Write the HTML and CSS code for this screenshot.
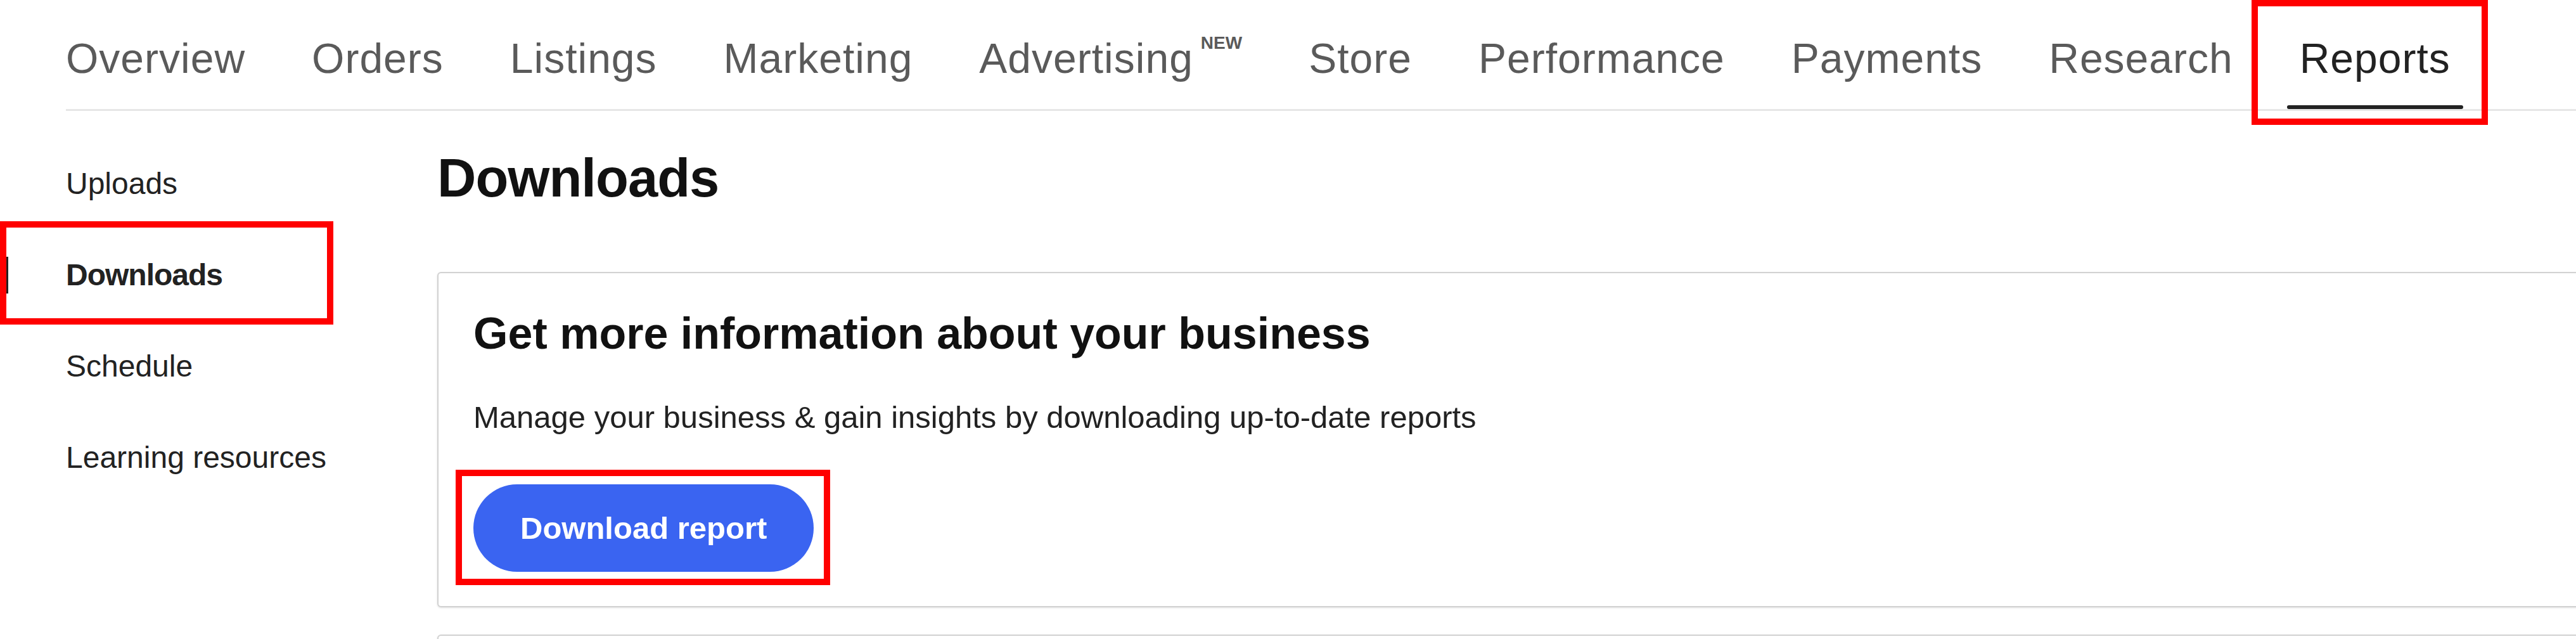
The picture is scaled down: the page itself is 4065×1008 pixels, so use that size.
FILE: index.html
```html
<!DOCTYPE html>
<html lang="en">
<head>
<meta charset="utf-8">
<title>Reports – Downloads</title>
<link rel="stylesheet" href="styles.css">
</head>
<body>
<header class="topnav">
  <ul class="tabs">
    <li class="tab"><a href="#">Overview</a></li>
    <li class="tab"><a href="#">Orders</a></li>
    <li class="tab"><a href="#">Listings</a></li>
    <li class="tab"><a href="#">Marketing</a></li>
    <li class="tab"><a href="#">Advertising</a><sup class="badge">NEW</sup></li>
    <li class="tab"><a href="#">Store</a></li>
    <li class="tab"><a href="#">Performance</a></li>
    <li class="tab"><a href="#">Payments</a></li>
    <li class="tab"><a href="#">Research</a></li>
    <li class="tab tab-active mark-tab"><a href="#">Reports</a></li>
  </ul>
</header>
<div class="layout">
  <nav class="sidenav">
    <a class="side-item" href="#">Uploads</a>
    <a class="side-item side-active mark-side" href="#">Downloads</a>
    <a class="side-item" href="#">Schedule</a>
    <a class="side-item" href="#">Learning resources</a>
  </nav>
  <main class="main">
    <h1 class="page-title">Downloads</h1>
    <section class="card">
      <h2 class="card-title">Get more information about your business</h2>
      <p class="card-text">Manage your business &amp; gain insights by downloading up-to-date reports</p>
      <div class="btn-row">
        <div class="btn-frame"><button class="btn" type="button">Download report</button></div>
      </div>
    </section>
    <section class="card card-next"></section>
  </main>
</div>
</body>
</html>
```
FILE: styles.css
```css
*, *::before, *::after { box-sizing: border-box; }

html, body {
  margin: 0;
  padding: 0;
  overflow: hidden;
  background: #fff;
}

body {
  font-family: "Liberation Sans", Arial, sans-serif;
  color: #222;
  width: 4065px;
  height: 1008px;
}

a { color: inherit; text-decoration: none; }

/* ---------- top tabs ---------- */
.topnav {
  padding-left: 104px;
}

.tabs {
  list-style: none;
  margin: 0;
  padding: 52px 0 0 0;
  display: flex;
  gap: 105px;
  border-bottom: 3px solid #e6e6e6;
}

.tab {
  position: relative;
  padding-bottom: 40px;
  font-size: 66px;
  line-height: 80px;
  letter-spacing: 1px;
  color: #5a5a5a;
  white-space: nowrap;
}

.badge {
  display: inline-block;
  vertical-align: top;
  font-size: 28px;
  line-height: 28px;
  font-weight: 700;
  letter-spacing: 0;
  margin-left: 12px;
  margin-top: 2px;
  color: #5a5a5a;
}

.tab-active { color: #222; }

.tab-active::after {
  content: "";
  position: absolute;
  left: -20px;
  right: -20px;
  bottom: 0;
  height: 6px;
  border-radius: 3px;
  background: #222;
}

.mark-tab::before {
  content: "";
  position: absolute;
  top: -52px;
  bottom: -25px;
  left: -76px;
  right: -59px;
  border: 10px solid #ff0000;
  pointer-events: none;
}

/* ---------- layout ---------- */
.layout {
  display: grid;
  grid-template-columns: 690px 1fr;
}

.sidenav {
  display: flex;
  flex-direction: column;
  padding-top: 43px;
}

.side-item {
  position: relative;
  padding: 43px 0 43px 104px;
  font-size: 48px;
  line-height: 58px;
  color: #222;
  white-space: nowrap;
}

.side-active {
  font-weight: 700;
  letter-spacing: -1px;
}

.side-active::before {
  content: "";
  position: absolute;
  left: 9px;
  top: 43px;
  width: 4px;
  height: 58px;
  background: #222;
}

.mark-side::after {
  content: "";
  position: absolute;
  left: 0;
  top: -13px;
  bottom: -6px;
  width: 526px;
  border: 10px solid #ff0000;
  pointer-events: none;
}

/* ---------- main ---------- */
.main {
  padding-top: 56px;
  min-width: 0;
}

.page-title {
  margin: 0;
  font-size: 85px;
  line-height: 100px;
  font-weight: 700;
  letter-spacing: -1px;
  color: #111;
}

.card {
  margin-top: 98px;
  width: calc(100% + 200px);
  border: 2px solid #d2d2d2;
  border-radius: 6px;
  padding: 55px 0 54px 55px;
  box-shadow: 0 1px 3px rgba(0, 0, 0, 0.12);
  background: #fff;
}

.card-title {
  margin: 0;
  font-size: 70px;
  line-height: 80px;
  font-weight: 700;
  color: #111;
}

.card-text {
  margin: 62px 0 0 0;
  font-size: 49px;
  line-height: 60px;
  color: #222;
}

.btn-row {
  margin-top: 76px;
  display: flex;
}

.btn-frame {
  position: relative;
  display: flex;
}

.btn-frame::after {
  content: "";
  position: absolute;
  top: -23px;
  bottom: -21px;
  left: -28px;
  right: -26px;
  border: 10px solid #ff0000;
  pointer-events: none;
}

.btn {
  display: block;
  border: 0;
  border-radius: 69px;
  background: #3a64f1;
  color: #fff;
  font-family: "Liberation Sans", Arial, sans-serif;
  font-size: 49px;
  line-height: 58px;
  font-weight: 700;
  padding: 40px 74px;
  cursor: pointer;
}

.card-next {
  margin-top: 43px;
  height: 120px;
  padding: 0;
}
```
